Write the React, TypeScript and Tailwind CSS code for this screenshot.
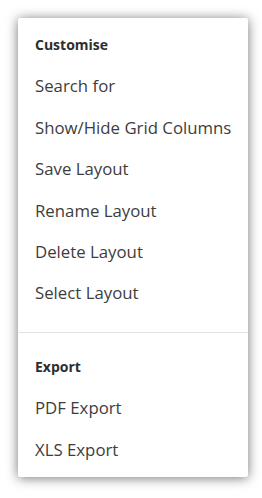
export default function App() {
    const customise = ['Search for', 'Show/Hide Grid Columns', 'Save Layout', 'Rename Layout', 'Delete Layout', 'Select Layout'];
    const exports = ['PDF Export', 'XLS Export'];

    return (
        <div className="min-h-screen bg-white pl-[18px] pt-[18px]" style={{ fontFamily: '"Open Sans", sans-serif' }}>
            <div className="w-[230px] h-[459px] bg-white rounded-[2px] shadow-[0_1px_12px_rgba(0,0,0,0.55)] flex flex-col text-[#3d3d3d]">
                {/* Customise */}
                <div className="pt-[6px] pb-[18px]">
                    <div className="h-[41.4px] flex items-center pl-[17px] text-[14px] font-bold text-[#2e2e2e]">Customise</div>
                    {customise.map((item) => (
                        <div key={item} className="h-[41.4px] flex items-center pl-[17px] text-[16.8px] whitespace-nowrap">
                            {item}
                        </div>
                    ))}
                </div>

                <div className="h-px bg-[#e2e2e2]" />

                {/* Export */}
                <div className="pt-[13px]">
                    <div className="h-[41.4px] flex items-center pl-[17px] text-[14px] font-bold text-[#2e2e2e]">Export</div>
                    {exports.map((item) => (
                        <div key={item} className="h-[41.4px] flex items-center pl-[17px] text-[16.8px] whitespace-nowrap">
                            {item}
                        </div>
                    ))}
                </div>
            </div>
        </div>
    );
}
